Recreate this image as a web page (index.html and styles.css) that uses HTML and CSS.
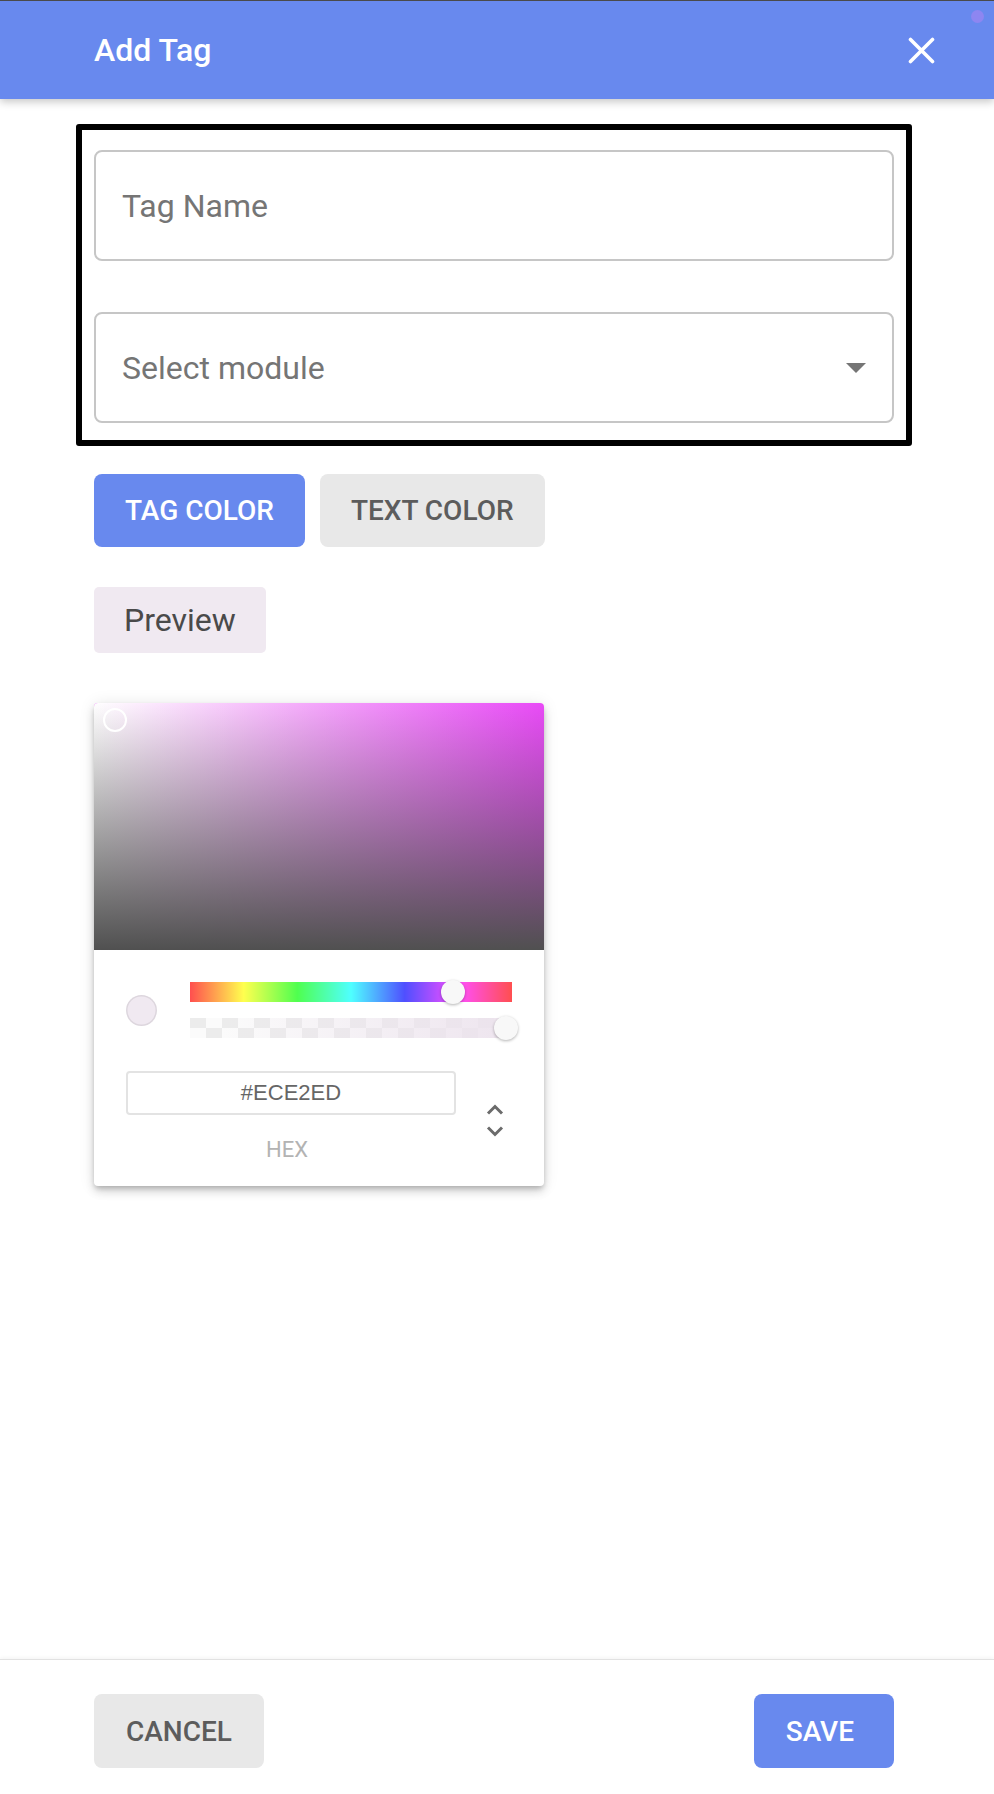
FILE: index.html
```html
<!DOCTYPE html>
<html lang="en">
<head>
    <meta charset="UTF-8">
    <meta name="viewport" content="width=device-width, initial-scale=1.0">
    <title>Add Tag</title>
    <link rel="stylesheet" href="styles.css">
</head>
<body>
    <div class="dialog">
        <!-- Title bar -->
        <header class="dialog-header">
            <h1 class="dialog-title">Add Tag</h1>
            <button class="close-btn" aria-label="Close">
                <svg width="27" height="27" viewBox="0 0 27 27">
                    <path d="M2.5 2.5L24.5 24.5M24.5 2.5L2.5 24.5" stroke="#fff" stroke-width="3.6" stroke-linecap="round"/>
                </svg>
            </button>
            <span class="status-dot"></span>
        </header>

        <main class="dialog-body">
            <!-- Name and module -->
            <form class="tag-form">
                <input class="field" type="text" name="tagName" placeholder="Tag Name">
                <div class="field select-field">
                    <span>Select module</span>
                    <svg width="20" height="10" viewBox="0 0 20 10">
                        <path d="M0 0H20L10 10Z" fill="#757575"/>
                    </svg>
                </div>
            </form>

            <!-- Which colour is being edited -->
            <div class="tab-row">
                <button class="btn btn-primary">Tag Color</button>
                <button class="btn btn-grey">Text Color</button>
            </div>

            <div class="preview-chip">Preview</div>

            <!-- Colour picker -->
            <div class="color-picker">
                <div class="picker-canvas">
                    <span class="canvas-dot"></span>
                </div>
                <div class="picker-controls">
                    <div class="slider-row">
                        <span class="swatch"></span>
                        <div class="sliders">
                            <div class="slider hue-slider">
                                <span class="thumb" style="left: 251px"></span>
                            </div>
                            <div class="slider alpha-slider">
                                <span class="thumb" style="left: 304px"></span>
                            </div>
                        </div>
                    </div>
                    <div class="hex-row">
                        <div class="hex-col">
                            <input class="hex-input" type="text" value="#ECE2ED">
                            <span class="hex-label">HEX</span>
                        </div>
                        <button class="mode-btn" aria-label="Switch mode">
                            <svg width="18" height="35" viewBox="0 0 18 35">
                                <path d="M2 10.5L9 3.5L16 10.5M2 24.5L9 31.5L16 24.5" fill="none" stroke="#6b6b6b" stroke-width="3"/>
                            </svg>
                        </button>
                    </div>
                </div>
            </div>
        </main>

        <footer class="dialog-footer">
            <button class="btn btn-grey footer-btn">Cancel</button>
            <button class="btn btn-primary footer-btn save-btn">Save</button>
        </footer>
    </div>
</body>
</html>
```

FILE: styles.css
```css
/* Page */
body {
    margin: 0;
    font-family: Roboto, "Noto Sans", sans-serif;
    background-color: #fff;
}

.dialog {
    display: flex;
    flex-direction: column;
    min-height: 100vh;
}

/* Header */
.dialog-header {
    position: relative;
    z-index: 1;
    height: 98px;
    border-top: 1px solid #4a4a4a;
    background-color: #6889ee;
    display: flex;
    align-items: center;
    justify-content: space-between;
    padding: 0 59px 0 94px;
    box-shadow: 0 3px 8px rgba(0, 0, 0, 0.22);
}

.dialog-title {
    margin: 0;
    font-size: 32px;
    font-weight: 500;
    color: #fff;
}

.close-btn {
    display: flex;
    padding: 0;
    border: none;
    background: none;
}

.status-dot {
    position: absolute;
    top: 9px;
    right: 10px;
    width: 13px;
    height: 13px;
    border-radius: 50%;
    background-color: #8d86f1;
}

/* Body */
.dialog-body {
    flex: 1;
    padding: 25px 100px 0 94px;
}

.tag-form {
    margin: 0 -18px;
    padding: 20px 12px 17px;
    border: 6px solid #000;
    border-radius: 3px;
    display: flex;
    flex-direction: column;
    gap: 51px;
}

.field {
    box-sizing: border-box;
    width: 100%;
    height: 111px;
    padding: 0 26px;
    border: 2px solid #c6c6c6;
    border-radius: 8px;
    font-family: Roboto, sans-serif;
    font-size: 32px;
    color: #757575;
    outline: none;
}

.field::placeholder {
    color: #757575;
}

.select-field {
    display: flex;
    align-items: center;
    justify-content: space-between;
}

/* Buttons */
.tab-row {
    display: flex;
    gap: 15px;
    margin-top: 28px;
}

.btn {
    height: 73px;
    padding: 0 31px;
    border: none;
    border-radius: 8px;
    font-family: Roboto, sans-serif;
    font-size: 28px;
    font-weight: 500;
    text-transform: uppercase;
    cursor: pointer;
}

.btn-primary {
    background-color: #6889ee;
    color: #fff;
}

.btn-grey {
    background-color: #e8e8e8;
    color: #5c5c5c;
}

.preview-chip {
    display: flex;
    align-items: center;
    width: max-content;
    height: 66px;
    margin-top: 40px;
    padding: 0 30px;
    border-radius: 5px;
    background-color: #f0e9f1;
    font-size: 32px;
    color: #4a4a4a;
}

/* Colour picker */
.color-picker {
    width: 450px;
    margin-top: 50px;
    border-radius: 4px;
    overflow: hidden;
    background-color: #fff;
    box-shadow: 0 3px 5px -1px rgba(0, 0, 0, 0.2), 0 6px 10px rgba(0, 0, 0, 0.12), 0 1px 16px rgba(0, 0, 0, 0.1);
}

.picker-canvas {
    position: relative;
    height: 247px;
    background:
        linear-gradient(to bottom, rgba(80, 80, 80, 0), #505050),
        linear-gradient(to right, #fff, rgba(255, 255, 255, 0)),
        #e94af7;
}

.canvas-dot {
    position: absolute;
    left: 9px;
    top: 5px;
    width: 24px;
    height: 24px;
    box-sizing: border-box;
    border: 2px solid #fff;
    border-radius: 50%;
}

.picker-controls {
    padding: 32px 32px 23px;
}

.slider-row {
    display: flex;
    align-items: center;
    gap: 33px;
}

.swatch {
    flex: none;
    width: 31px;
    height: 31px;
    border-radius: 50%;
    background-color: #f0e9f1;
    box-shadow: inset 0 0 0 1.5px rgba(0, 0, 0, 0.08);
}

.sliders {
    flex: 1;
    display: flex;
    flex-direction: column;
    gap: 16px;
}

.slider {
    position: relative;
    height: 20px;
}

.hue-slider {
    background: linear-gradient(to right, #ff4f4f, #ffff4f, #4fff4f, #4fffff, #4f4fff, #ff4fff, #ff4f4f);
}

.alpha-slider {
    background:
        linear-gradient(to right, rgba(236, 226, 237, 0) 10%, rgba(236, 226, 237, 0.9)),
        repeating-conic-gradient(#fbfbfb 0 25%, #ececec 0 50%) 0 0 / 32px 20px;
}

.thumb {
    position: absolute;
    top: -2px;
    width: 24px;
    height: 24px;
    border-radius: 50%;
    background-color: #f8f8f8;
    box-shadow: 0 1px 3px rgba(0, 0, 0, 0.3);
}

.hex-row {
    display: flex;
    gap: 30px;
    margin-top: 33px;
}

.hex-col {
    width: 330px;
    display: flex;
    flex-direction: column;
    align-items: center;
}

.hex-input {
    box-sizing: border-box;
    width: 100%;
    height: 44px;
    border: 2px solid #e3e3e3;
    border-radius: 4px;
    text-align: center;
    font-family: "Liberation Sans", Arial, sans-serif;
    font-size: 22px;
    color: #666;
    outline: none;
}

.hex-label {
    margin-top: 22px;
    padding-right: 8px;
    font-size: 22px;
    line-height: 26px;
    color: #b3b3b3;
}

.mode-btn {
    align-self: flex-start;
    margin-top: 32px;
    padding: 0;
    border: none;
    background: none;
    display: flex;
}

/* Footer */
.dialog-footer {
    height: 135px;
    box-sizing: border-box;
    display: flex;
    align-items: flex-start;
    justify-content: space-between;
    padding: 34px 100px 0 94px;
    border-top: 1px solid #e2e2e2;
    box-shadow: 0 -1px 4px rgba(0, 0, 0, 0.05);
}

.footer-btn {
    height: 74px;
    padding: 0 32px;
}

.save-btn {
    padding-right: 40px;
}
```
